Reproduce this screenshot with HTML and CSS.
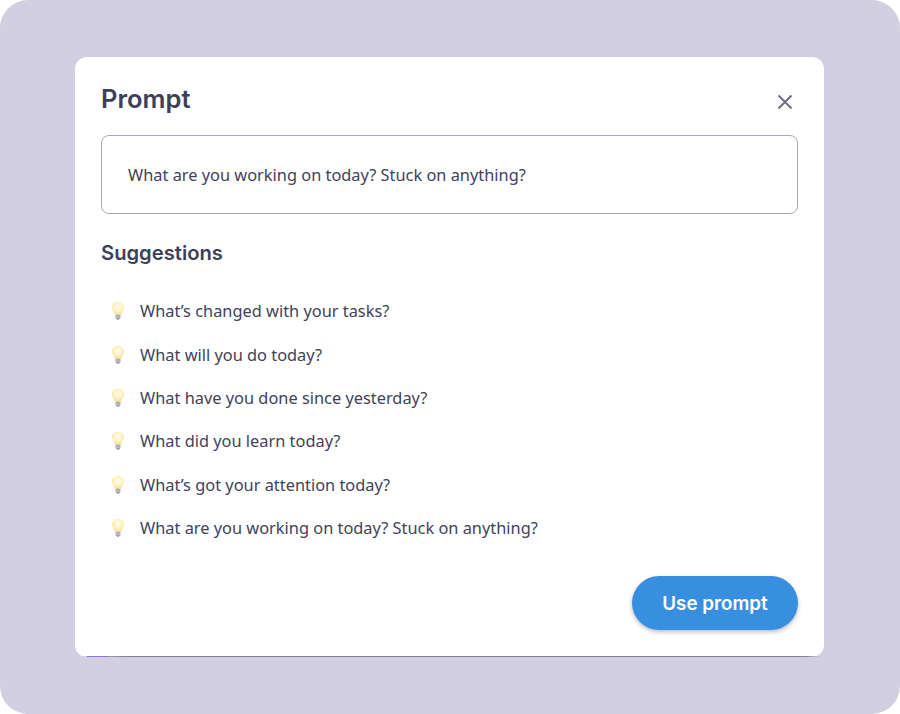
FILE: index.html
```html
<!DOCTYPE html>
<html lang="en">
<head>
<meta charset="utf-8">
<title>Prompt</title>
<link rel="stylesheet" href="styles.css">
</head>
<body>
<svg class="defs" width="0" height="0" aria-hidden="true">
  <defs>
    <radialGradient id="glass" cx="50%" cy="40%" r="62%">
      <stop offset="0" stop-color="#fffdf0"/>
      <stop offset=".55" stop-color="#fff3c4"/>
      <stop offset="1" stop-color="#f8dc85"/>
    </radialGradient>
    <symbol id="bulb" viewBox="0 0 14 20">
      <path d="M7 .8C3.500.8 1 3.300 1 6.500c0 2.600 2.100 4.200 2.800 6.600.1.400.4.600.8.600h4.800c.4 0 .7-.2.8-.6C11 10.700 13 9.100 13 6.500 13 3.300 10.500.8 7 .8z" fill="url(#glass)"/>
      <path d="M4.600 13.700h4.800v3.200c0 .5-.4.9-.9 1.100-.4.700-.9 1.100-1.500 1.100s-1.100-.4-1.500-1.100c-.5-.2-.9-.6-.9-1.100z" fill="#a3a1ab"/>
      <path d="M4.800 15.100h4.400M4.800 16.600h4.400" stroke="#d4d2d9" stroke-width=".6"/>
    </symbol>
  </defs>
</svg>
<div class="frame">
  <section class="modal">
    <header class="modal-head">
      <h1 class="title">Prompt</h1>
      <button class="close" aria-label="Close">
        <svg viewBox="0 0 16 16" width="16" height="16"><path d="M1.500 1.500l13 13M14.500 1.500l-13 13" fill="none" stroke="#6f6d85" stroke-width="2"/></svg>
      </button>
    </header>
    <div class="prompt-box">What are you working on today? Stuck on anything?</div>
    <h2 class="subtitle">Suggestions</h2>
    <ul class="list">
      <li class="item"><svg class="bulb"><use href="#bulb"/></svg><span>What’s changed with your tasks?</span></li>
      <li class="item"><svg class="bulb"><use href="#bulb"/></svg><span>What will you do today?</span></li>
      <li class="item"><svg class="bulb"><use href="#bulb"/></svg><span>What have you done since yesterday?</span></li>
      <li class="item"><svg class="bulb"><use href="#bulb"/></svg><span>What did you learn today?</span></li>
      <li class="item"><svg class="bulb"><use href="#bulb"/></svg><span>What’s got your attention today?</span></li>
      <li class="item"><svg class="bulb"><use href="#bulb"/></svg><span>What are you working on today? Stuck on anything?</span></li>
    </ul>
    <footer class="actions"><button class="primary">Use prompt</button></footer>
    <span class="edge"></span>
    <span class="glow"></span>
  </section>
</div>
</body>
</html>
```
FILE: styles.css
```css
* { box-sizing: border-box; }
html, body { margin: 0; padding: 0; background: #fff; }
body { font-family: "Noto Sans", "Open Sans", sans-serif; color: #43425a; }
.defs { position: absolute; }
.frame {
  width: 900px; height: 714px;
  background: #d1cfe0;
  border-radius: 28px;
  padding: 57px 76px 57px 75px;
}
.modal {
  position: relative;
  height: 600px;
  background: #fff;
  border-radius: 12px;
  padding: 26px;
}
.modal-head { display: flex; justify-content: space-between; align-items: center; height: 32px; }
.title { margin: 0; font: 600 25.500px/32px Inter, sans-serif; color: #403f59; }
.close { border: 0; background: none; padding: 0; display: flex; margin: 5px 5px 0 0; }
.prompt-box {
  margin-top: 20px;
  height: 79px;
  border: 1px solid #a9a7b4;
  border-radius: 8px;
  padding: 0 26px;
  display: flex; align-items: center;
  font-size: 16.380px;
}
.subtitle { margin: 25px 0 0; font: 600 20.200px/28px Inter, sans-serif; color: #403f59; }
.list { list-style: none; margin: 28.300px 0 0; padding: 0; display: flex; flex-direction: column; gap: 11.400px; }
.item { display: flex; align-items: center; height: 32px; font-size: 16.380px; padding-left: 9.500px; gap: 15.500px; }
.bulb { width: 14px; height: 20px; flex: none; }
.actions { display: flex; justify-content: flex-end; margin-top: 31.700px; }
.primary {
  width: 166px; height: 54px;
  border: 0; border-radius: 27px;
  padding: 2px 0 0;
  background: #388fdf; color: #fff;
  font: 600 18.800px/1 Inter, sans-serif;
  box-shadow: 0 2px 4px rgba(60,60,80,.35);
}
.edge {
  position: absolute; left: 6px; right: 4px; bottom: 0;
  height: 1px;
  background: linear-gradient(90deg, #d9d7e2, #7f7d8f 6%, #7f7d8f 98%, #d2d0df);
}
.glow {
  position: absolute; left: 12px; bottom: 0;
  width: 22px; height: 1px;
  background: linear-gradient(90deg, #8a7fb8, #9a6ff0 50%, #8a7fb8);
}
```
